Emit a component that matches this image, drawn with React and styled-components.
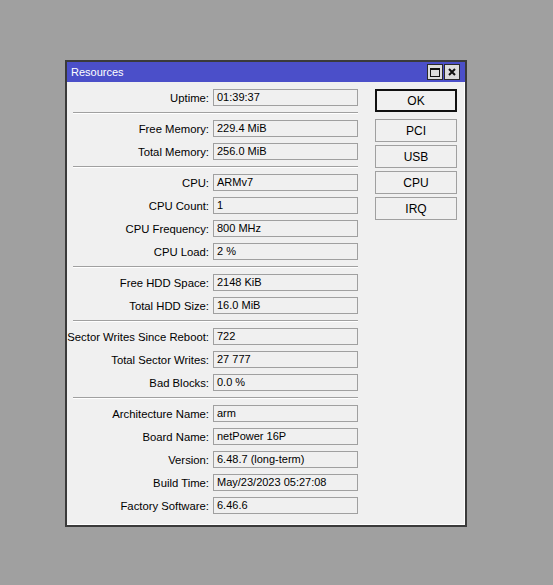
import React from "react";
import styled, { createGlobalStyle } from "styled-components";

const GlobalStyle = createGlobalStyle`
  html, body {
    margin: 0;
    padding: 0;
    background: #a0a0a0;
  }
  body {
    font-family: "Liberation Sans", Arial, sans-serif;
    font-size: 11px;
    color: #000;
  }
`;

const Page = styled.div`
  width: 553px;
  height: 585px;
  padding: 60px 0 0 65px;
  box-sizing: border-box;
`;

const Window = styled.div`
  width: 402px;
  height: 467px;
  box-sizing: border-box;
  border: 2px solid #3a3a3a;
  background: #f0f0f0;
  box-shadow: inset -1px -1px 0 #ffffff;
  display: flex;
  flex-direction: column;
`;

const TitleBar = styled.div`
  height: 20px;
  background: #4b4fc9;
  display: flex;
  align-items: center;
  padding: 0 5px 0 4px;
  color: #fff;
  font-size: 11px;
`;

const Title = styled.div`
  flex: 1;
`;

const TitleButton = styled.div`
  width: 14px;
  height: 14px;
  margin-left: 1px;
  border: 1px solid #2a2a2a;
  background: #dcdcdc;
  display: flex;
  align-items: center;
  justify-content: center;
`;

const Body = styled.div`
  flex: 1;
  display: flex;
  padding: 7px 8px 11px 0;
`;

const Form = styled.div`
  width: 291px;
  display: flex;
  flex-direction: column;
`;

const Row = styled.div`
  display: flex;
  align-items: center;
  height: 17px;
  & + & {
    margin-top: 6px;
  }
`;

const Label = styled.div`
  width: 142px;
  text-align: right;
  padding-right: 4px;
  white-space: nowrap;
  font-size: 11.3px;
`;

const Field = styled.div`
  width: 145px;
  height: 17px;
  box-sizing: border-box;
  border: 1px solid #a0a0a0;
  background: #f0f0f0;
  padding: 0 3px;
  line-height: 15px;
  white-space: nowrap;
`;

const Separator = styled.div`
  margin: 6px 0 6px 6px;
  height: 1px;
  background: #a0a0a0;
  border-bottom: 1px solid #ffffff;
`;

const Buttons = styled.div`
  margin-left: 17px;
  display: flex;
  flex-direction: column;
  gap: 3px;
`;

const Button = styled.div`
  width: 82px;
  height: 23px;
  box-sizing: border-box;
  border: ${(p) => (p.primary ? "2px solid #111" : "1px solid #a0a0a0")};
  background: #f0f0f0;
  display: flex;
  align-items: center;
  justify-content: center;
  font-size: 12px;
  margin-bottom: ${(p) => (p.primary ? "4px" : "0")};
`;

const groups = [
  [["Uptime", "01:39:37"]],
  [
    ["Free Memory", "229.4 MiB"],
    ["Total Memory", "256.0 MiB"],
  ],
  [
    ["CPU", "ARMv7"],
    ["CPU Count", "1"],
    ["CPU Frequency", "800 MHz"],
    ["CPU Load", "2 %"],
  ],
  [
    ["Free HDD Space", "2148 KiB"],
    ["Total HDD Size", "16.0 MiB"],
  ],
  [
    ["Sector Writes Since Reboot", "722"],
    ["Total Sector Writes", "27 777"],
    ["Bad Blocks", "0.0 %"],
  ],
  [
    ["Architecture Name", "arm"],
    ["Board Name", "netPower 16P"],
    ["Version", "6.48.7 (long-term)"],
    ["Build Time", "May/23/2023 05:27:08"],
    ["Factory Software", "6.46.6"],
  ],
];

const MaxIcon = () => (
  <svg width="10" height="9" viewBox="0 0 10 9">
    <rect x="0.5" y="0.5" width="9" height="8" fill="none" stroke="#111" />
    <rect x="0" y="0" width="10" height="2" fill="#111" />
  </svg>
);

const CloseIcon = () => (
  <svg width="8" height="8" viewBox="0 0 8 8">
    <path d="M1 1L7 7M7 1L1 7" stroke="#111" strokeWidth="2" />
  </svg>
);

export default function App() {
  return (
    <Page>
      <GlobalStyle />
      <Window>
        <TitleBar>
          <Title>Resources</Title>
          <TitleButton>
            <MaxIcon />
          </TitleButton>
          <TitleButton>
            <CloseIcon />
          </TitleButton>
        </TitleBar>
        <Body>
          <Form>
            {groups.map((group, gi) => (
              <React.Fragment key={gi}>
                {gi > 0 && <Separator />}
                <div>
                  {group.map(([label, value]) => (
                    <Row key={label}>
                      <Label>{label}:</Label>
                      <Field>{value}</Field>
                    </Row>
                  ))}
                </div>
              </React.Fragment>
            ))}
          </Form>
          <Buttons>
            <Button primary>OK</Button>
            <Button>PCI</Button>
            <Button>USB</Button>
            <Button>CPU</Button>
            <Button>IRQ</Button>
          </Buttons>
        </Body>
      </Window>
    </Page>
  );
}
